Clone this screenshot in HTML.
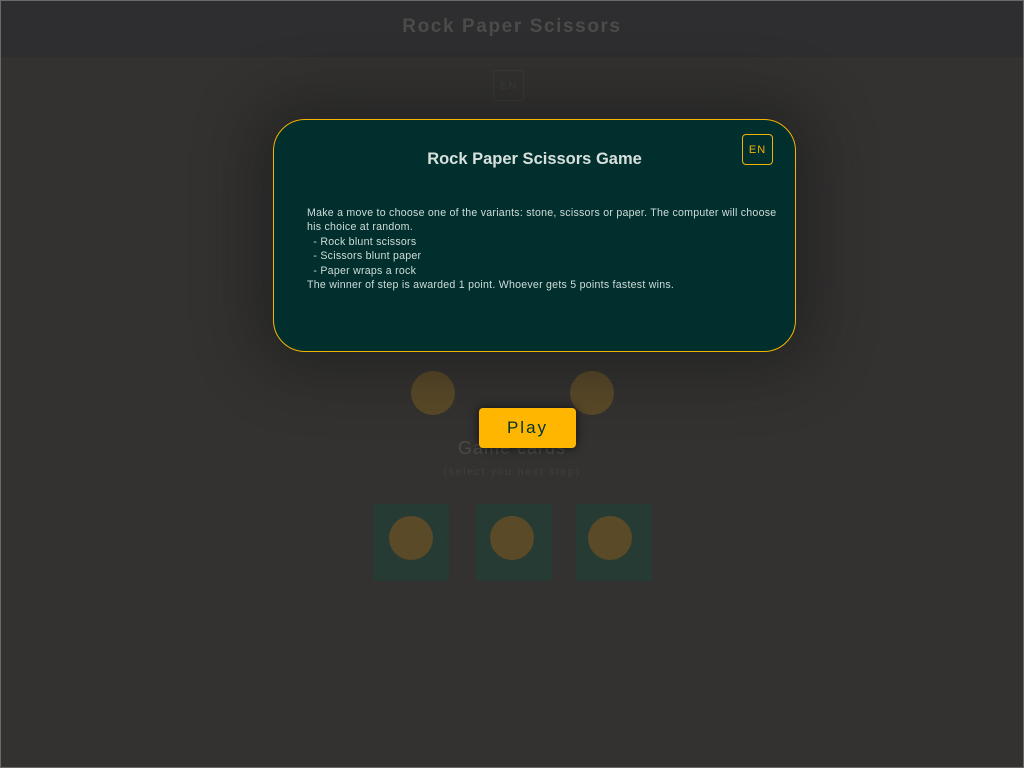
<!DOCTYPE html>
<html><head><style>
body{margin:0;width:1024px;height:768px;overflow:hidden;background:#333231;font-family:"Liberation Sans",sans-serif;position:relative}
.frame{position:absolute;left:0;top:0;width:1022px;height:766px;border:1px solid #6a6a6a;}
.hdr{position:absolute;left:1px;top:1px;width:1022px;height:56px;background:#2e2d2f;text-align:center;color:#4c4b4a;font-weight:bold;font-size:19px;letter-spacing:1.6px;line-height:52px}
.en0{position:absolute;left:493px;top:70px;width:29px;height:29px;border:1px solid #3b3b3a;border-radius:3px;color:#3e3e3d;font-size:11px;text-align:center;line-height:30px;letter-spacing:1px}
.c{position:absolute;width:44px;height:44px;border-radius:50%;background:#5a4a28}
.card{position:absolute;top:504px;width:76px;height:77px;background:#273b35;border-radius:3px}
.card .c{left:16px;top:12px}
.gc{position:absolute;left:0;width:1024px;text-align:center;top:438px;color:#4a4a49;font-size:18px;letter-spacing:1px}
.sub{position:absolute;left:0;width:1024px;text-align:center;top:466px;color:#3e3f3d;font-size:11px;letter-spacing:1.5px}
.modal{position:absolute;left:273px;top:119px;width:521px;height:231px;background:#002f2d;border:1.5px solid #f4b300;border-radius:32px;box-shadow:0 0 60px 20px rgba(20,20,20,.45)}
.modal h1{margin:0;position:absolute;left:0;width:100%;top:30px;text-align:center;color:#d8e0dc;font-size:16.5px;font-weight:bold}
.en{position:absolute;left:468px;top:14px;width:29px;height:29px;border:1px solid #f4b300;border-radius:4px;color:#f4b300;font-size:11px;text-align:center;line-height:30px;letter-spacing:1px}
.txt{position:absolute;left:33px;top:86px;color:#cfdcd8;font-size:10.6px;line-height:14.4px;white-space:pre;letter-spacing:0.25px}
.play{position:absolute;left:479px;top:408px;width:97px;height:40px;background:#ffb600;border-radius:4px;color:#003330;font-size:17px;text-align:center;line-height:39px;letter-spacing:2px;box-shadow:0 0 10px rgba(0,0,0,.7)}
</style></head><body>
<div class="frame"></div>
<div class="hdr">Rock Paper Scissors</div>
<div class="en0">EN</div>
<div class="c" style="left:411px;top:371px"></div>
<div class="c" style="left:570px;top:371px"></div>
<div class="gc">Game cards</div>
<div class="sub">(select you next step)</div>
<div class="card" style="left:373px"><div class="c"></div></div>
<div class="card" style="left:476px"><div class="c" style="left:14px"></div></div>
<div class="card" style="left:576px"><div class="c" style="left:12px"></div></div>
<div class="modal">
<h1>Rock Paper Scissors Game</h1>
<div class="en">EN</div>
<div class="txt">Make a move to choose one of the variants: stone, scissors or paper. The computer will choose
his choice at random.
  - Rock blunt scissors
  - Scissors blunt paper
  - Paper wraps a rock
The winner of step is awarded 1 point. Whoever gets 5 points fastest wins.</div>
</div>
<div class="play">Play</div>
</body></html>
